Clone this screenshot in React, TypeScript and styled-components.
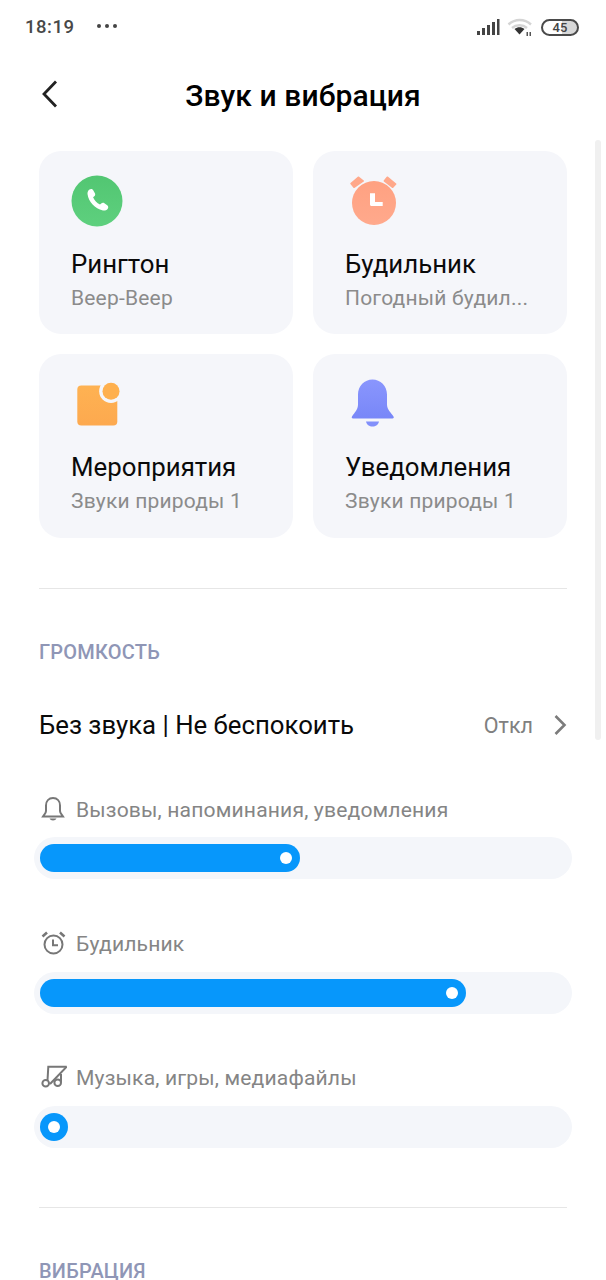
import React from "react";
import styled, { createGlobalStyle } from "styled-components";

const Global = createGlobalStyle`
  html, body { margin: 0; padding: 0; background: #fff; }
  body { font-family: Roboto, "Noto Sans", sans-serif; }
  * { box-sizing: border-box; }
`;

const Screen = styled.div`
  position: relative;
  width: 606px;
  height: 1280px;
  overflow: hidden;
  background: #fff;
  color: #000;
`;

const StatusBar = styled.div`
  height: 54px;
  padding: 0 27px 0 25px;
  display: flex;
  align-items: center;
  color: #444;
`;

const Clock = styled.span`
  font-size: 18.5px;
  font-weight: 500;
  letter-spacing: 0.5px;
  color: #484848;
`;

const Dots = styled.div`
  margin-left: 23px;
  margin-top: -3px;
  display: flex;
  gap: 4px;
  span {
    width: 4px;
    height: 4px;
    border-radius: 50%;
    background: #444;
  }
`;

const StatusIcons = styled.div`
  margin-left: auto;
  display: flex;
  align-items: center;
`;

const Battery = styled.div`
  margin-left: 8px;
  width: 38px;
  height: 17px;
  border: 2px solid #4a4a4a;
  border-radius: 9px;
  background: linear-gradient(90deg, #fff 0 55%, #d8d8d8 55% 100%);
  display: flex;
  align-items: center;
  justify-content: center;
  font-size: 13px;
  font-weight: 500;
  color: #444;
`;

const Header = styled.header`
  position: relative;
  height: 72px;
  margin-top: 6px;
  padding-bottom: 2px;
  display: flex;
  align-items: center;
  justify-content: center;
`;

const BackButton = styled.div`
  position: absolute;
  left: 41px;
  top: 19px;
  display: flex;
`;

const Title = styled.h1`
  margin: 0;
  font-size: 30px;
  font-weight: 500;
  letter-spacing: 0.1px;
`;

const Content = styled.main`
  padding: 19px 39px 0;
`;

const CardGrid = styled.div`
  display: grid;
  grid-template-columns: 254px 254px;
  grid-template-rows: 183px 184px;
  gap: 20px;
`;

const Card = styled.div`
  border-radius: 22px;
  background: #f5f6fa;
  padding: 24px 16px 0 32px;
`;

const CardIcon = styled.div`
  height: 52px;
  display: flex;
  align-items: center;
  margin-bottom: 21px;
`;

const CardTitle = styled.div`
  font-size: 25.8px;
  line-height: 32px;
  color: #0a0a0a;
`;

const CardSub = styled.div`
  margin-top: 5px;
  font-size: 21px;
  line-height: 26px;
  color: #8b8b8b;
  white-space: nowrap;
  letter-spacing: 0.2px;
`;

const Divider = styled.div<{ $top: number }>`
  height: 1px;
  margin-top: ${(p) => p.$top}px;
  background: #e6e6e6;
`;

const SectionLabel = styled.div`
  margin-top: 51px;
  font-size: 20px;
  font-weight: 500;
  line-height: 24px;
  color: #8f96b6;
  letter-spacing: 0.2px;
`;

const ToggleRow = styled.div`
  margin-top: 45px;
  height: 32px;
  display: flex;
  align-items: center;
  font-size: 25.75px;
  color: #0a0a0a;
`;

const RowValue = styled.span`
  margin-left: auto;
  margin-right: 20px;
  font-size: 21.5px;
  color: #808080;
`;

const VolumeBlock = styled.div<{ $top: number }>`
  margin-top: ${(p) => p.$top}px;
`;

const VolumeLabel = styled.div`
  height: 26px;
  padding-left: 2px;
  display: flex;
  align-items: center;
  gap: 9px;
  font-size: 21.1px;
  color: #858585;
  letter-spacing: 0.15px;
`;

const Track = styled.div`
  margin: 15px -5px 0 -5px;
  height: 42px;
  padding: 7px 5px 7px 6px;
  border-radius: 21px;
  background: #f4f6fa;
`;

const Fill = styled.div`
  position: relative;
  height: 28px;
  min-width: 28px;
  border-radius: 14px;
  background: #0797fb;
  &::after {
    content: "";
    position: absolute;
    right: 8px;
    top: 8px;
    width: 12px;
    height: 12px;
    border-radius: 50%;
    background: #fff;
  }
`;

const ScrollThumb = styled.div`
  position: absolute;
  left: 595px;
  top: 140px;
  width: 6px;
  height: 600px;
  border-radius: 3px;
  background: #f0f0f0;
`;

const SignalIcon = () => (
  <svg width="24" height="18" viewBox="0 0 24 18">
    <rect x="1" y="13" width="3" height="4" fill="#444" />
    <rect x="6" y="10" width="3" height="7" fill="#444" />
    <rect x="11" y="7" width="3" height="10" fill="#444" />
    <rect x="16" y="4" width="3" height="13" fill="#444" />
    <rect x="21" y="1" width="2.5" height="16" fill="#444" />
  </svg>
);

const WifiIcon = () => (
  <svg width="26" height="20" viewBox="0 0 26 20" style={{ marginLeft: 7 }}>
    <path d="M1.500 7.500C8 1.500 17.500 1.500 24 7.500" fill="none" stroke="#d4d4d4" strokeWidth="2.4" />
    <path d="M5 11C9.200 7.300 15.800 7.300 20 11" fill="none" stroke="#d4d4d4" strokeWidth="2.4" />
    <path d="M7.500 12C10.500 9.800 14.500 9.800 17.500 12L12.500 17.500Z" fill="#333" />
    <rect x="19.500" y="15" width="1.500" height="4" fill="#555" />
    <rect x="22.500" y="15" width="1.500" height="4" fill="#555" />
  </svg>
);

const PhoneBadge = () => (
  <svg width="52" height="52" viewBox="0 0 52 52">
    <defs>
      <linearGradient id="phoneFill" x1="0" y1="0" x2="0" y2="1">
        <stop offset="0" stopColor="#52c672" />
        <stop offset="1" stopColor="#5ed07e" />
      </linearGradient>
    </defs>
    <circle cx="26" cy="26" r="25.500" fill="url(#phoneFill)" />
    <path
      d="M18.500 14.500c1.300-.9 3-.6 3.700.7l1.700 3c.6 1 .3 2.300-.6 3l-1.200 1c1.300 3 3.700 5.700 6.900 7.300l1.200-1.100c.9-.8 2.200-.9 3.200-.2l2.800 2c1.200.9 1.400 2.600.4 3.700-1.200 1.300-3 1.900-4.700 1.500-8-1.900-14.300-8.500-15.400-16.500-.2-1.700.6-3.400 2-4.400z"
      fill="#fff"
    />
  </svg>
);

const AlarmBadge = () => (
  <svg width="54" height="52" viewBox="0 0 54 52">
    <defs>
      <linearGradient id="alarmFill" x1="0" y1="0" x2="0" y2="1">
        <stop offset="0" stopColor="#ffa181" />
        <stop offset="1" stopColor="#ffa98c" />
      </linearGradient>
    </defs>
    <path d="M6 8.600 13.300 2.200 18.300 6 9 12.300Z" fill="#ffa88a" stroke="#ffa88a" strokeWidth="1.500" strokeLinejoin="round" />
    <path d="M39.300 6 42.300 2.200 50.700 9 47.700 12.300Z" fill="#ffa88a" stroke="#ffa88a" strokeWidth="1.500" strokeLinejoin="round" />
    <circle cx="29" cy="28" r="22" fill="url(#alarmFill)" />
    <path d="M25 18.300h5v8.700h7.700v4H26.500c-.8 0-1.500-.7-1.500-1.500z" fill="#fff" />
  </svg>
);

const EventBadge = () => (
  <svg width="52" height="52" viewBox="0 0 52 52">
    <defs>
      <linearGradient id="eventFill" x1="0" y1="0" x2="0" y2="1">
        <stop offset="0" stopColor="#feb252" />
        <stop offset="1" stopColor="#fda94f" />
      </linearGradient>
    </defs>
    <rect x="6.300" y="7.500" width="40" height="40" rx="4" fill="url(#eventFill)" />
    <circle cx="40" cy="13.200" r="11.800" fill="#f5f6fa" />
    <circle cx="40" cy="13.200" r="8.500" fill="#feb04e" />
  </svg>
);

const BellBadge = () => (
  <svg width="52" height="52" viewBox="0 0 52 52" style={{ overflow: "visible" }}>
    <defs>
      <linearGradient id="bellFill" x1="0" y1="0" x2="0" y2="1">
        <stop offset="0" stopColor="#8a96fd" />
        <stop offset="1" stopColor="#7887f8" />
      </linearGradient>
    </defs>
    <path
      d="M27.500 1.500c8 0 14.500 6.500 14.500 15v10c0 5 4 8 6.500 12 .7 1.200 0 2-1 2H8c-1 0-1.700-.8-1-2 2.500-4 6-7 6-12v-10C13 8 19.500 1.500 27.500 1.500z"
      fill="url(#bellFill)"
    />
    <path d="M21 43.500h13c-.5 3-3.300 5-6.500 5s-6-2-6.500-5z" fill="#8290fa" />
  </svg>
);

const BackIcon = () => (
  <svg width="18" height="30" viewBox="0 0 18 30">
    <path d="M15 2.500 3 15l12 12.500" fill="none" stroke="#222" strokeWidth="2.800" />
  </svg>
);

const ChevronIcon = () => (
  <svg width="14" height="22" viewBox="0 0 14 22">
    <path d="M2.500 2 11.500 11l-9 9" fill="none" stroke="#7c7c7c" strokeWidth="2.600" />
  </svg>
);

const BellOutline = () => (
  <svg width="26" height="26" viewBox="0 0 26 26" fill="none" stroke="#777" strokeWidth="2">
    <path d="M12 2c4.200 0 7 3 7 7.500v5.500c0 2.200 1.700 3.500 3 5.500H2c1.300-2 3-3.300 3-5.500V9.500C5 5 7.800 2 12 2z" />
    <path d="M8.500 22.500h7c-.5 1.300-2 2-3.500 2s-3-.7-3.500-2z" fill="#777" stroke="none" />
  </svg>
);

const ClockOutline = () => (
  <svg width="26" height="26" viewBox="0 0 26 26" fill="none" stroke="#777" strokeWidth="2">
    <circle cx="12.500" cy="13.500" r="9" />
    <path d="M12 8.500v5.800h5" />
    <path d="M1.500 5.500 6 1.500M23.500 5.500 19 1.500" strokeWidth="2.600" />
  </svg>
);

const MusicOff = () => (
  <svg width="26" height="26" viewBox="0 0 26 26" fill="none" stroke="#777" strokeWidth="2">
    <circle cx="4.700" cy="18.300" r="3.300" />
    <circle cx="16.700" cy="17.800" r="3.300" />
    <path d="M6.500 15.500 7.300 1.700H25.700" />
    <path d="M20 9v8.500" />
    <path d="M25.700 1.700 9 19" />
  </svg>
);

const cards = [
  { title: "Рингтон", sub: "Beep-Beep", icon: <PhoneBadge /> },
  { title: "Будильник", sub: "Погодный будил...", icon: <AlarmBadge /> },
  { title: "Мероприятия", sub: "Звуки природы 1", icon: <EventBadge /> },
  { title: "Уведомления", sub: "Звуки природы 1", icon: <BellBadge /> },
];

const volumes = [
  { label: "Вызовы, напоминания, уведомления", width: 260, top: 55, icon: <BellOutline /> },
  { label: "Будильник", width: 426, top: 51.5, icon: <ClockOutline /> },
  { label: "Музыка, игры, медиафайлы", width: 28, top: 51, icon: <MusicOff /> },
];

export default function App() {
  return (
    <Screen>
      <Global />
      <StatusBar>
        <Clock>18:19</Clock>
        <Dots>
          <span />
          <span />
          <span />
        </Dots>
        <StatusIcons>
          <SignalIcon />
          <WifiIcon />
          <Battery>45</Battery>
        </StatusIcons>
      </StatusBar>
      <Header>
        <BackButton>
          <BackIcon />
        </BackButton>
        <Title>Звук и вибрация</Title>
      </Header>
      <Content>
        <CardGrid>
          {cards.map((c) => (
            <Card key={c.title}>
              <CardIcon>{c.icon}</CardIcon>
              <CardTitle>{c.title}</CardTitle>
              <CardSub>{c.sub}</CardSub>
            </Card>
          ))}
        </CardGrid>
        <Divider $top={50} />
        <SectionLabel>ГРОМКОСТЬ</SectionLabel>
        <ToggleRow>
          Без звука | Не беспокоить
          <RowValue>Откл</RowValue>
          <ChevronIcon />
        </ToggleRow>
        {volumes.map((v) => (
          <VolumeBlock key={v.label} $top={v.top}>
            <VolumeLabel>
              {v.icon}
              {v.label}
            </VolumeLabel>
            <Track>
              <Fill style={{ width: v.width }} />
            </Track>
          </VolumeBlock>
        ))}
        <Divider $top={59} />
        <SectionLabel>ВИБРАЦИЯ</SectionLabel>
      </Content>
      <ScrollThumb />
    </Screen>
  );
}
